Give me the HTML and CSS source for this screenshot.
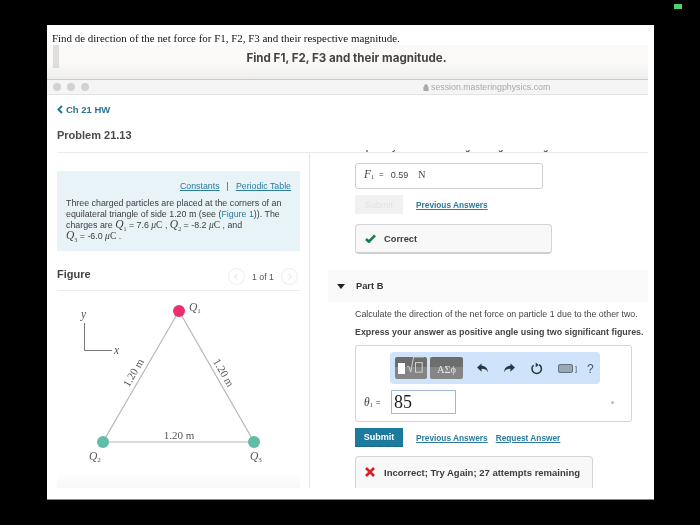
FILE: index.html
```html
<!DOCTYPE html>
<html lang="en">
<head>
<meta charset="utf-8">
<title>Problem 21.13</title>
<link rel="stylesheet" href="styles.css">
</head>
<body>
<div class="topbar"><span class="pill"></span></div>
<main class="panel">
  <p class="question">Find de direction of the net force for F1, F2, F3 and their respective magnitude.</p>
  <div class="window">
    <header class="titlebar">
      <span class="tab-stub"></span>
      <h1 class="doc-title">Find F1, F2, F3 and their magnitude.</h1>
    </header>
    <div class="urlbar">
      <span class="dot"></span><span class="dot"></span><span class="dot"></span>
      <span class="url">
        <svg class="lock" viewBox="0 0 8 9" width="6" height="7"><path d="M1 4h6v5H1zM2 4V2.500a2 2 0 0 1 4 0V4" fill="#aaa" stroke="#aaa" stroke-width=".8"/></svg>
        session.masteringphysics.com
      </span>
    </div>
    <div class="hw">
      <nav class="crumb"><svg viewBox="0 0 6 9" width="6" height="9"><path d="M5 1 1.500 4.500 5 8" fill="none" stroke="#2b7392" stroke-width="2"/></svg><span>Ch 21 HW</span></nav>
      <div class="problem-row">
        <h2 class="problem">Problem 21.13</h2>
        <div class="clipped"><span>Express your answer using two significant figures.</span></div>
      </div>
      <div class="cols">
        <section class="left">
          <div class="info">
            <div class="info-links"><a>Constants</a><span class="sep">|</span><a>Periodic Table</a></div>
            <p class="info-text">Three charged particles are placed at the corners of an equilateral triangle of side 1.20 <span class="serif">m</span> (see (<span class="link-plain">Figure 1</span>)). The charges are <i class="math">Q</i><sub>1</sub> = 7.6 <span class="serif"><i>μ</i>C</span> , <i class="math">Q</i><sub>2</sub> = -8.2 <span class="serif"><i>μ</i>C</span> , and<br><i class="math">Q</i><sub>3</sub> = -6.0 <span class="serif"><i>μ</i>C</span> .</p>
          </div>
          <div class="figure-head">
            <h3 class="figure-title">Figure</h3>
            <div class="pager">
              <span class="circle"><svg viewBox="0 0 6 10" width="4" height="7"><path d="M5 1 1 5l4 4" fill="none" stroke="#ccc" stroke-width="1"/></svg></span>
              <span class="count">1 of 1</span>
              <span class="circle"><svg viewBox="0 0 6 10" width="4" height="7"><path d="m1 1 4 4-4 4" fill="none" stroke="#ccc" stroke-width="1"/></svg></span>
            </div>
          </div>
          <svg class="diagram" viewBox="57 291 243 197" width="243" height="197">
            <g stroke="#b8b8b8" stroke-width="1.200" fill="none"><path d="M179 311 103 442H254Z"/></g>
            <path d="M84.500 323V350.500H112" fill="none" stroke="#777" stroke-width="1"/>
            <circle cx="179" cy="311" r="6" fill="#ee2f6f"/>
            <circle cx="103" cy="442" r="6" fill="#62bda6"/>
            <circle cx="254" cy="442" r="6" fill="#62bda6"/>
            <g class="fig-label">
              <text x="81" y="318" class="ital">y</text>
              <text x="114" y="354" class="ital">x</text>
              <text x="189" y="311" class="ital">Q<tspan class="small" dy="2">1</tspan></text>
              <text x="89" y="460" class="ital">Q<tspan class="small" dy="2">2</tspan></text>
              <text x="250" y="460" class="ital">Q<tspan class="small" dy="2">3</tspan></text>
              <text x="179" y="439" text-anchor="middle">1.20 m</text>
              <text x="134" y="376" text-anchor="middle" transform="rotate(-60 134 373)">1.20 m</text>
              <text x="223" y="376" text-anchor="middle" transform="rotate(60 223 373)">1.20 m</text>
            </g>
          </svg>
        </section>
        <section class="right">
          <div class="answer-box">
            <i class="math">F</i><sub class="sub-serif">1</sub><span class="eq">=</span><span class="val">0.59</span><span class="unit">N</span>
          </div>
          <div class="actions first">
            <span class="btn disabled">Submit</span>
            <a class="action-link">Previous Answers</a>
          </div>
          <div class="feedback correct">
            <svg viewBox="0 0 12 10" width="11" height="9"><path d="M1 5.500 4.200 8.500 11 1.500" fill="none" stroke="#12804a" stroke-width="3"/></svg>
            <span>Correct</span>
          </div>
          <div class="part-head">
            <svg viewBox="0 0 8 5" width="8" height="5"><path d="M0 0h8L4 5z" fill="#222"/></svg>
            <span>Part B</span>
          </div>
          <p class="prompt">Calculate the direction of the net force on particle 1 due to the other two.</p>
          <p class="prompt strong">Express your answer as positive angle using two significant figures.</p>
          <div class="math-box">
            <div class="toolbar">
              <span class="tool tool-tpl"><span class="blank"></span><svg class="surd" viewBox="0 0 20 20" width="19" height="19"><path d="M1 11h2l2 6 3-16h11" fill="none" stroke="#d8d8d8" stroke-width="1"/><rect x="10" y="7" width="7" height="10" fill="none" stroke="#d8d8d8"/></svg></span>
              <span class="tool tool-greek">ΑΣϕ</span>
              <svg class="ico ico-undo" viewBox="0 0 12 10" width="11" height="10"><path d="M0 4.500 5 0v2.600c4 0 6.500 2.400 7 7-1.500-3-3.500-3.900-7-3.900V9z" fill="#2b3640"/></svg>
              <svg class="ico ico-redo" viewBox="0 0 12 10" width="11" height="10"><path d="M12 4.500 7 0v2.600c-4 0-6.500 2.400-7 7 1.500-3 3.500-3.900 7-3.900V9z" fill="#2b3640"/></svg>
              <svg class="ico ico-reset" viewBox="0 0 14 14" width="12" height="13"><path d="M9.500 2.600A5.500 5.500 0 1 1 3 3.200" fill="none" stroke="#2b3640" stroke-width="1.800"/><path d="M5.500 0v5.500L9 3z" fill="#2b3640"/></svg>
              <span class="kbd"><span class="kbd-key"></span><span class="kbd-br">]</span></span>
              <span class="help">?</span>
            </div>
            <div class="entry">
              <span class="entry-label"><i class="math">θ</i><sub class="sub-serif">1</sub><span class="eq">=</span></span>
              <span class="entry-input">85</span>
              <span class="entry-dot"></span>
            </div>
          </div>
          <div class="actions second">
            <span class="btn">Submit</span>
            <a class="action-link">Previous Answers</a>
            <a class="action-link req">Request Answer</a>
          </div>
          <div class="feedback wrong">
            <svg viewBox="0 0 10 10" width="10" height="10"><path d="M1 1l8 8M9 1l-8 8" stroke="#d81f26" stroke-width="2.600"/></svg>
            <span>Incorrect; Try Again; 27 attempts remaining</span>
          </div>
        </section>
      </div>
    </div>
  </div>
</main>
</body>
</html>
```
FILE: styles.css
```css
* { box-sizing: border-box; }
html, body { margin: 0; padding: 0; background: #000; height: 525px; overflow: hidden; }
body { font-family: "Liberation Sans", Arial, sans-serif; color: #3c3c3c; }
h1, h2, h3, p { margin: 0; font-weight: normal; }
.topbar { height: 25px; display: flex; justify-content: flex-end; align-items: flex-start; padding: 4px 18px 0 0; }
.pill { width: 8px; height: 5px; background: #4fd264; }
.panel { width: 607px; height: 475px; margin-left: 47px; background: #fff; border-bottom: 1px solid #8a8a8a; filter: blur(.45px); overflow: hidden; }
.question { height: 20px; padding: 6px 0 0 5px; font: 10.950px/14px "Liberation Serif", serif; color: #111; white-space: nowrap; }
.window { width: 601px; height: 443px; overflow: hidden; }
.titlebar { height: 35px; display: flex; background: linear-gradient(#fbfaf8 0%, #f9f8f6 60%, #eeeeee 100%); border-bottom: 1px solid #c8c8c8; }
.tab-stub { width: 6px; height: 23px; margin-left: 6px; background: #dedede; flex: none; }
.doc-title { flex: 1; text-align: center; font: bold 11.600px/27px Inter, "Liberation Sans", sans-serif; color: #444; padding-right: 14px; white-space: nowrap; }
.urlbar { height: 15px; background: #f5f5f5; border-bottom: 1px solid #e2e2e2; display: flex; align-items: center; padding-left: 6px; gap: 6px; }
.dot { width: 8px; height: 8px; border-radius: 50%; background: #d2d2d2; }
.url { margin-left: 328px; font-size: 8.800px; color: #a9a9a9; display: flex; align-items: center; gap: 0; white-space: nowrap; }
.lock { margin-right: 2px; }
.hw { padding-left: 10px; }
.crumb { height: 28px; display: flex; align-items: center; gap: 3px; font-size: 9.500px; font-weight: bold; color: #2b7392; }
.problem-row { height: 30px; display: flex; justify-content: space-between; align-items: flex-end; border-bottom: 1px solid #eaeaea; }
.problem { font-size: 11px; font-weight: bold; color: #4a4a4a; line-height: 14px; align-self: flex-start; margin-top: 5px; }
.clipped { width: 293px; height: 2px; overflow: hidden; display: flex; align-items: flex-end; white-space: nowrap; font-size: 8.900px; font-weight: bold; line-height: 10px; color: #555; }
.cols { display: flex; height: 335px; }
.left { width: 253px; flex: none; padding: 18px 9px 0 0; border-right: 1px solid #dfe3ee; }
.info { height: 80px; background: #e7f3f7; padding: 10px 9px 0; }
.info-links { text-align: right; font-size: 8.800px; line-height: 11px; }
.info-links a { color: #2b7b9c; text-decoration: underline; }
.sep { margin: 0 7px; color: #555; }
.info-text { margin-top: 6px; font-size: 8.850px; line-height: 11px; color: #3d3d3d; }
.info-text sub { font-size: 6px; line-height: 0; font-family: "Liberation Serif", serif; }
.serif { font-family: "Liberation Serif", serif; font-size: 9.500px; line-height: 0; }
.math { font-family: "Liberation Serif", serif; font-style: italic; font-size: 11.500px; line-height: 0; }
.link-plain { color: #2b7b9c; }
.figure-head { height: 40px; display: flex; justify-content: space-between; align-items: flex-end; padding-bottom: 5px; border-bottom: 1px solid #eaeaea; }
.figure-title { font-size: 11px; font-weight: bold; color: #444; line-height: 14px; margin-bottom: 4px; }
.pager { display: flex; align-items: center; gap: 7px; font-size: 8.800px; color: #555; padding-right: 2px; }
.circle { width: 17px; height: 17px; border: 1px solid #ececec; border-radius: 50%; display: flex; align-items: center; justify-content: center; background: #fff; }
.diagram { display: block; background: linear-gradient(#fff 92%, #f8f8f8 100%); }
.fig-label text { font: 11px "Liberation Serif", serif; fill: #555; }
.fig-label .ital { font-style: italic; font-size: 11.500px; }
.fig-label .small { font-size: 7px; font-style: normal; }
.right { flex: 1; min-width: 0; padding: 10px 0 0 45px; overflow: hidden; }
.answer-box { width: 188px; height: 26px; border: 1px solid #cfcfcf; border-radius: 3px; display: flex; align-items: center; padding: 0 0 4px 8px; color: #444; }
.sub-serif { font: 6px "Liberation Serif", serif; margin-top: 6px; }
.eq { font-size: 8px; margin: 0 7px 0 5px; }
.val { font-size: 9px; margin-top: 1px; }
.unit { font: 10px "Liberation Serif", serif; margin-left: 10px; }
.actions { display: flex; align-items: center; }
.actions.first { margin-top: 6px; height: 19px; }
.actions.second { margin-top: 6px; height: 19px; }
.btn { width: 48px; height: 19px; background: #1c7a9f; color: #fff; font-size: 9px; display: flex; align-items: center; justify-content: center; font-weight: bold; border-bottom: 1px solid #17688a; }
.btn.disabled { background: #f1f1f1; color: #e2e2e2; border: 0; font-weight: normal; }
.action-link { margin-left: 13px; color: #2b7b9c; font-size: 8.300px; font-weight: bold; text-decoration: underline; white-space: nowrap; }
.action-link.req { margin-left: 8px; }
.feedback { display: flex; align-items: center; font-weight: bold; color: #3c3c3c; background: #f8f8f8; border: 1px solid #d4d4d4; border-bottom: 2px solid #cfcfcf; border-radius: 4px; padding-left: 9px; gap: 8px; }
.correct { width: 197px; height: 30px; margin-top: 10px; font-size: 9.300px; }
.wrong { width: 238px; height: 36px; margin-top: 9px; padding-bottom: 3px; white-space: nowrap; font-size: 9.500px; gap: 9px; }
.part-head { width: 320px; height: 32px; margin: 16px 0 0 -27px; background: #f9f9f9; display: flex; align-items: center; padding-left: 9px; gap: 11px; font-size: 9.300px; font-weight: bold; color: #333; }
.prompt { font-size: 8.850px; line-height: 11px; margin-top: 7px; color: #444; white-space: nowrap; }
.prompt.strong { font-size: 8.900px; font-weight: bold; }
.math-box { width: 277px; height: 77px; margin-top: 7px; border: 1px solid #d4d4d4; border-radius: 3px; padding: 6px 0 0 34px; }
.toolbar { width: 210px; height: 32px; background: #cfe3fb; border-radius: 4px; display: flex; align-items: center; padding-left: 5px; }
.tool { height: 22px; border-radius: 2px; background: linear-gradient(#6d6d6d 45%, #858585 45%); display: flex; align-items: center; color: #e6e6e6; flex: none; }
.tool-tpl { width: 32px; padding: 0 0 0 3px; gap: 1px; }
.blank { width: 7px; height: 11px; background: #fff; }
.surd { margin-top: -6px; }
.tool-greek { width: 33px; margin-left: 3px; justify-content: center; font: 10.500px "Liberation Serif", serif; padding-top: 2px; }
.ico { flex: none; }
.ico-undo { margin-left: 14px; }
.ico-redo { margin-left: 16px; }
.ico-reset { margin-left: 16px; }
.kbd { display: flex; align-items: center; gap: 2px; margin-left: 15px; }
.kbd-key { width: 15px; height: 9px; border-radius: 2px; background: #9aa7b4; border: 1px solid #66717c; }
.kbd-br { font-size: 7px; color: #445; }
.help { margin-left: 10px; font-size: 12px; color: #4a5560; padding-top: 2px; }
.entry { display: flex; align-items: center; margin: 6px 0 0 -26px; }
.entry-label { width: 27px; display: flex; align-items: center; }
.entry-label .eq { margin: 0 0 0 3px; }
.entry-input { width: 65px; height: 24px; border: 1px solid #a5b9dc; padding-left: 2px; font: 18px/22px "Liberation Serif", serif; color: #222; }
.entry-dot { width: 3px; height: 3px; border-radius: 50%; background: #bbb; margin-left: 155px; }
```
